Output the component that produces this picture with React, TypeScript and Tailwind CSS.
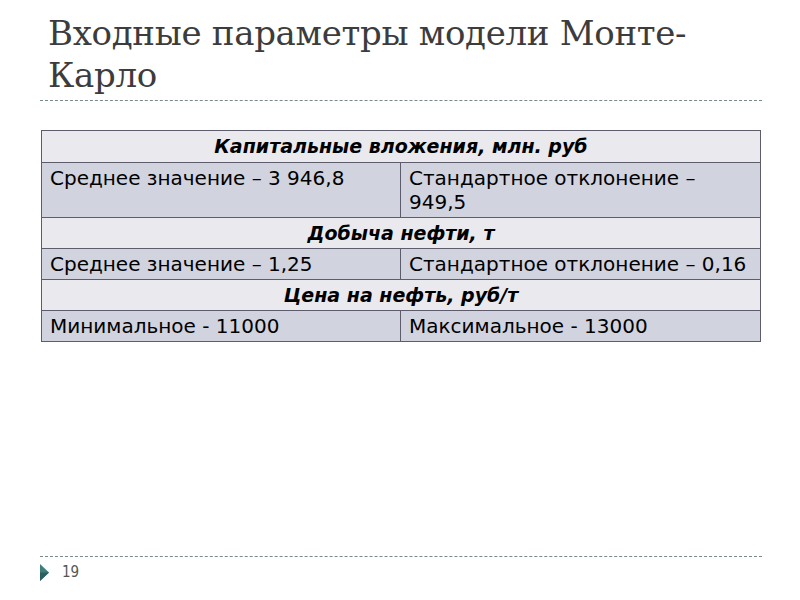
export default function App() {
  const rows: { head: string; left: string; right: string }[] = [
    { head: "Капитальные вложения, млн. руб", left: "Среднее значение – 3 946,8", right: "Стандартное отклонение – 949,5" },
    { head: "Добыча нефти, т", left: "Среднее значение – 1,25", right: "Стандартное отклонение – 0,16" },
    { head: "Цена на нефть, руб/т", left: "Минимальное - 11000", right: "Максимальное - 13000" },
  ]
  return (
    <div className="w-[800px] h-[600px] bg-white relative overflow-hidden">
      {/* Title */}
      <div className="pl-[48px] pt-[12px] h-[100px]">
        <h1 className="text-[34px] leading-[42px] text-[#3c3c3c] font-['DejaVu_Serif',serif] tracking-[-0.3px]">
          Входные параметры модели Монте-
          <br />
          Карло
        </h1>
      </div>
      <div className="mx-[40px] w-[722px] border-t border-dashed border-[#7a8a8a]" />

      {/* Table */}
      <div className="mt-[29px] ml-[41px] w-[720px] border border-[#5c5c6c] font-['DejaVu_Sans',sans-serif] text-[20px] text-black">
        {rows.map((r, i) => (
          <div key={r.head}>
            <div className={`h-[31px] bg-[#e9e9ee] flex items-center justify-center text-[19px] font-bold italic border-[#5c5c6c] ${i > 0 ? "border-t" : ""}`}>
              {r.head}
            </div>
            <div className="grid grid-cols-[359px_1fr] bg-[#d1d3df] border-t border-[#5c5c6c]">
              <div className="px-[8px] pt-[3px] pb-[3px] leading-[24px] border-r border-[#5c5c6c]">{r.left}</div>
              <div className="pl-[8px] pr-[12px] pt-[3px] pb-[3px] leading-[24px]">{r.right}</div>
            </div>
          </div>
        ))}
      </div>

      {/* Footer */}
      <div className="absolute left-[40px] top-[556px] w-[722px] border-t border-dashed border-[#7a8a8a]" />
      <div className="absolute left-[40px] top-[564px] flex items-center gap-[12px]">
        <svg width="10" height="17" viewBox="0 0 10 17">
          <polygon points="0,0 9,8.5 0,17" fill="#3d7f7c" />
          <polygon points="0,8.5 9,8.5 0,17" fill="#2c5f5e" />
        </svg>
        <span className="text-[15px] leading-[17px] text-[#555] font-['DejaVu_Sans_Condensed',sans-serif] font-light">19</span>
      </div>
    </div>
  )
}
